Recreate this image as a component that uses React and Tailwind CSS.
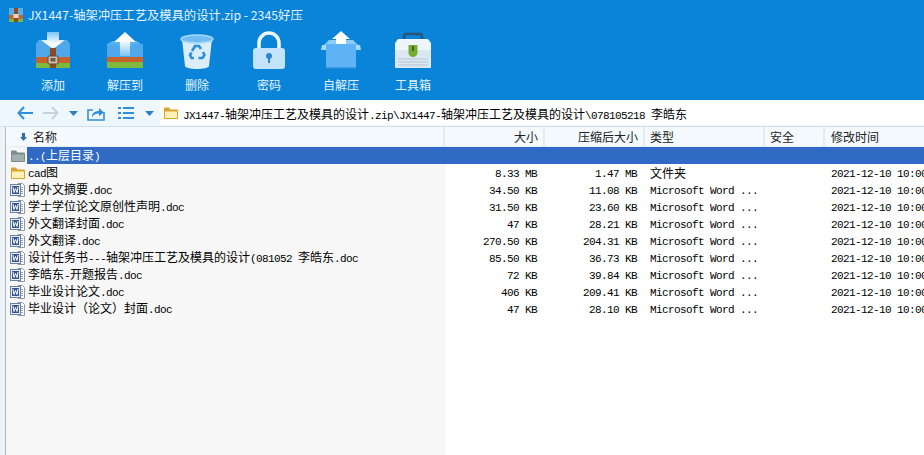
import { Fragment } from 'react';

const CJK_FONT = "[font-family:'Noto_Sans_CJK_SC','Noto_Sans',sans-serif]";

// latin runs are 6px wide per char like the bitmap font in the reference, cjk runs 12px
function Mixed({ text }) {
  const parts = text.match(/[\x20-\x7e]+|[^\x20-\x7e]+/g) || [];
  return (
    <>
      {parts.map((p, i) =>
        /^[\x20-\x7e]/.test(p) ? (
          <span key={i} className="whitespace-pre text-[11px] tracking-[-0.6px] [font-family:'Liberation_Mono',monospace]">{p}</span>
        ) : (
          <span key={i} className="whitespace-pre text-[12px] [font-family:'Noto_Sans_CJK_SC',sans-serif]">{p}</span>
        )
      )}
    </>
  );
}

function AddIcon() {
  return (
    <svg width="40" height="40" viewBox="0 0 40 40">
      <defs>
        <linearGradient id="addArrow" x1="0" y1="0" x2="0" y2="1">
          <stop offset="0" stopColor="#7cc4f6" />
          <stop offset="0.7" stopColor="#ffffff" />
        </linearGradient>
      </defs>
      <path d="M6 10h28l3 4v13H3V14z" fill="#5cb3f3" />
      <path d="M3 14 L6 10 H14 L20 20 L26 10 H34 L37 14 V27 H3z" fill="#4fa8ec" />
      <path d="M14 2h12v8h6L20 19 8 10h6z" fill="url(#addArrow)" />
      <rect x="17" y="18" width="6" height="20" fill="#8a4a24" />
      <rect x="3" y="27" width="34" height="6" fill="#c8622c" />
      <rect x="3" y="33" width="34" height="5" fill="#7db93d" />
      <rect x="17" y="33" width="6" height="5" fill="#8a4a24" />
      <rect x="15" y="26" width="10" height="8" rx="1" fill="#cdbfa9" stroke="#5d4a36" strokeWidth="1" />
      <rect x="17.500" y="28" width="5" height="3.500" fill="#6d5a46" />
    </svg>
  );
}

function ExtractIcon() {
  return (
    <svg width="40" height="40" viewBox="0 0 40 40">
      <defs>
        <linearGradient id="extractArrow" x1="0" y1="0" x2="0" y2="1">
          <stop offset="0.35" stopColor="#ffffff" />
          <stop offset="1" stopColor="#7cc4f6" />
        </linearGradient>
      </defs>
      <path d="M8 11h24l4 3v13H2V14z" fill="#5cb3f3" />
      <path d="M2 14 H12 L20 24 L28 14 H38 V27 H2z" fill="#4fa8ec" />
      <path d="M20 2 31 12h-6v14H15V12H9z" fill="url(#extractArrow)" />
      <rect x="2" y="27" width="36" height="5" fill="#c8622c" />
      <rect x="2" y="32" width="36" height="6" fill="#7db93d" />
    </svg>
  );
}

function TrashIcon() {
  return (
    <svg width="40" height="40" viewBox="0 0 40 40">
      <path d="M5 9l3 27c.3 2 6 3 12 3s11.700-1 12-3l3-27z" fill="#d9edfb" />
      <ellipse cx="20" cy="9" rx="16" ry="4" fill="#6fbdf2" />
      <ellipse cx="20" cy="9" rx="16" ry="4" fill="none" stroke="#a8d8f8" strokeWidth="1.500" />
      <g fill="none" stroke="#2d8fdc" strokeWidth="2.600">
        <path d="M15 21l3-5h4l2 3" />
        <path d="M26 22l1.500 3-2 3h-4" />
        <path d="M17 28h-2.500l-1.500-3 1.500-2.500" />
      </g>
    </svg>
  );
}

function LockIcon() {
  return (
    <svg width="40" height="40" viewBox="0 0 40 40">
      <path d="M10 20v-7a10 10 0 0 1 20 0v7" fill="none" stroke="#eef7fe" strokeWidth="3.500" />
      <rect x="4" y="18" width="32" height="21" rx="3" fill="#c2e3fb" />
      <circle cx="20" cy="26" r="3" fill="#2d86cf" />
      <rect x="19" y="27" width="2" height="6" fill="#2d86cf" />
    </svg>
  );
}

function SelfExtractIcon() {
  return (
    <svg width="40" height="40" viewBox="0 0 40 40">
      <path d="M20 1 29 9h-4v9H15V9h-4z" fill="#fff" />
      <path d="M8 10h7v5H3z M25 10h7l5 5H25z" fill="#8fcbf8" />
      <path d="M1 15h10l-2 5H0z M29 15h10l1 5H31z" fill="#a8d8fb" />
      <rect x="5" y="14" width="30" height="24" fill="#5eb3f6" />
      <path d="M5 37h30v1.500H5z" fill="#3f97dc" />
    </svg>
  );
}

function ToolboxIcon() {
  return (
    <svg width="40" height="40" viewBox="0 0 40 40">
      <path d="M11 10V6.500C11 5 12 4 13.500 4h13C28 4 29 5 29 6.500V10" fill="none" stroke="#2c5474" strokeWidth="2.500" />
      <path d="M5 9h30l3 4v8H2v-8z" fill="#eef6fc" />
      <rect x="2" y="20" width="36" height="18" rx="1" fill="#dbe8f3" />
      <path d="M5 29h30M5 32h30M5 35h30" stroke="#b4c4d2" strokeWidth="1" />
      <path d="M15.500 15h9v8c0 2-2 4-4.500 4s-4.500-2-4.500-4z" fill="#77ad2e" />
      <rect x="19" y="16" width="2" height="5" fill="#3f6a12" />
    </svg>
  );
}

function FolderIcon({ grey, className = '' }) {
  return (
    <svg width="16" height="16" viewBox="0 0 16 16" className={className}>
      <path d="M1 13V3.500C1 3 1.500 2.500 2 2.500h4l1.500 2H14c.6 0 1 .4 1 1V13c0 .6-.4 1-1 1H2c-.6 0-1-.4-1-1z" fill={grey ? '#7e8b8c' : '#d9a52e'} />
      <path d="M2 6.500h12V13H2z" fill={grey ? '#a3afaf' : '#fdf1b8'} />
    </svg>
  );
}

function DocIcon() {
  return (
    <svg width="16" height="16" viewBox="0 0 16 16" className="shrink-0">
      <path d="M8 1.500h4.500l2 2v11H8z" fill="#fff" stroke="#8c98a6" />
      <path d="M10 5.500h3M10 7.500h3M10 9.500h3M10 11.500h3" stroke="#9aa5b3" />
      <rect x="0.500" y="2.500" width="10" height="11" fill="#e9eef8" stroke="#6b7fa8" />
      <rect x="2" y="4" width="7" height="8" fill="#34568f" />
      <path d="M3 5l1 5.500 1.500-4 1.500 4 1-5.500" fill="none" stroke="#fff" strokeWidth="1" />
    </svg>
  );
}

const tools = [
  { label: '添加', Icon: AddIcon },
  { label: '解压到', Icon: ExtractIcon },
  { label: '删除', Icon: TrashIcon },
  { label: '密码', Icon: LockIcon },
  { label: '自解压', Icon: SelfExtractIcon },
  { label: '工具箱', Icon: ToolboxIcon },
];

const files = [
  { name: 'cad图', size: '8.33 MB', packed: '1.47 MB', type: '文件夹', folder: true },
  { name: '中外文摘要.doc', size: '34.50 KB', packed: '11.08 KB' },
  { name: '学士学位论文原创性声明.doc', size: '31.50 KB', packed: '23.60 KB' },
  { name: '外文翻译封面.doc', size: '47 KB', packed: '28.21 KB' },
  { name: '外文翻译.doc', size: '270.50 KB', packed: '204.31 KB' },
  { name: '设计任务书---轴架冲压工艺及模具的设计(081052 李皓东.doc', size: '85.50 KB', packed: '36.73 KB' },
  { name: '李皓东-开题报告.doc', size: '72 KB', packed: '39.84 KB' },
  { name: '毕业设计论文.doc', size: '406 KB', packed: '209.41 KB' },
  { name: '毕业设计（论文）封面.doc', size: '47 KB', packed: '28.10 KB' },
];

function HeaderCell({ width, right, children }) {
  return (
    <div className={`flex h-full shrink-0 items-center border-r-2 border-[#dfebf5] pl-[5px] pr-[5px] ${width} ${right ? 'justify-end' : ''}`}>
      <span className={`text-[12px] text-[#222] ${CJK_FONT}`}>{children}</span>
    </div>
  );
}

export default function App() {
  return (
    <div className="flex h-[455px] w-[924px] flex-col overflow-hidden bg-white text-black">
      {/* title bar + toolbar */}
      <div className="h-[100px] shrink-0 bg-[#0984d8]">
        <div className="flex h-[30px] items-center pl-[8px]">
          <svg width="16" height="16" viewBox="0 0 16 16">
            <rect x="1" y="1" width="14" height="8" fill="#5aaee8" />
            <rect x="1" y="8" width="14" height="4" fill="#c8622c" />
            <rect x="1" y="12" width="14" height="3" fill="#7db93d" />
            <rect x="6" y="1" width="4" height="14" fill="#8a4a24" />
            <rect x="5.500" y="7" width="5" height="4" fill="#e8dcc4" />
          </svg>
          <span className={`ml-[4px] text-[12.3px] text-[#e4f3ff] ${CJK_FONT}`}>JX1447-轴架冲压工艺及模具的设计.zip - 2345好压</span>
        </div>
        <div className="flex pl-[17px]">
          {tools.map(({ label, Icon }) => (
            <div key={label} className="flex w-[72px] flex-col items-center">
              <Icon />
              <span className={`mt-[6px] text-[12px] leading-[18px] text-[#e6f4ff] ${CJK_FONT}`}>{label}</span>
            </div>
          ))}
        </div>
      </div>

      {/* nav + address */}
      <div className="flex h-[27px] shrink-0 items-center border-b border-[#cfe0ee] bg-[#eef7fd] pl-[17px]">
        <svg width="16" height="14" viewBox="0 0 16 14" className="mr-[10px]">
          <path d="M7 1 1.500 7 7 13M2 7h14" fill="none" stroke="#2f8fdc" strokeWidth="2" />
        </svg>
        <svg width="16" height="14" viewBox="0 0 16 14" className="mr-[10px]">
          <path d="M9 1l5.500 6L9 13M14 7H0" fill="none" stroke="#c6d2dc" strokeWidth="2" />
        </svg>
        <svg width="9" height="5" viewBox="0 0 9 5" className="mr-[9px]"><path d="M0 0h9L4.500 5z" fill="#2b7fc4" /></svg>
        <svg width="18" height="15" viewBox="0 0 18 15" className="mr-[13px]">
          <path d="M6 4H1v10h16V6" fill="none" stroke="#2f8fdc" strokeWidth="1.600" />
          <path d="M5 11c0-4 3-6 7-6V2l5 4.500L12 10V7.500c-3 0-5 1-7 3.500z" fill="#2f8fdc" />
        </svg>
        <svg width="16" height="12" viewBox="0 0 16 12" className="mr-[11px]">
          <path d="M0 1h3M0 6h3M0 11h3M5 1h11M5 6h11M5 11h11" stroke="#2f8fdc" strokeWidth="2" />
        </svg>
        <svg width="9" height="5" viewBox="0 0 9 5" className="mr-[6px]"><path d="M0 0h9L4.500 5z" fill="#2b7fc4" /></svg>
        <div className="flex h-[24px] flex-1 items-center bg-white pl-[3px]">
          <FolderIcon className="mr-[4px]" />
          <span className="whitespace-nowrap">
            <Mixed text="JX1447-轴架冲压工艺及模具的设计.zip\JX1447-轴架冲压工艺及模具的设计\078105218 李皓东" />
          </span>
        </div>
      </div>

      {/* file list */}
      <div className="flex min-h-0 flex-1 bg-[#eef3f8] pl-[5px]">
        <div className="flex min-w-0 flex-1 flex-col border-l border-[#a9b8c8] bg-white">
          <div className="flex h-[20px] shrink-0 items-center border-b border-[#e3edf6] bg-[#f5fafe]">
            <div className="flex h-full w-[439px] shrink-0 items-center border-r-2 border-[#dfebf5] pl-[14px]">
              <svg width="7" height="8" viewBox="0 0 7 8" className="mr-[6px]"><path d="M2 0h3v4h2L3.500 8 0 4h2z" fill="#2f6ea8" /></svg>
              <span className={`text-[12px] text-[#222] ${CJK_FONT}`}>名称</span>
            </div>
            <HeaderCell width="w-[100px]" right>大小</HeaderCell>
            <HeaderCell width="w-[100px]" right>压缩后大小</HeaderCell>
            <HeaderCell width="w-[120px]">类型</HeaderCell>
            <HeaderCell width="w-[60px]">安全</HeaderCell>
            <div className="flex h-full items-center pl-[6px]">
              <span className={`text-[12px] text-[#222] ${CJK_FONT}`}>修改时间</span>
            </div>
          </div>
          <div className="min-h-0 flex-1 bg-[linear-gradient(90deg,#f7f7f7_439px,#ffffff_439px)]">
            <div className="flex h-[17px] items-center pl-[4px] leading-[17px]">
              <FolderIcon grey className="shrink-0" />
              <div className="ml-[1px] flex h-full flex-1 items-center bg-[#316ac5] pl-[1px] text-white">
                <span className="whitespace-nowrap"><Mixed text="..(上层目录)" /></span>
              </div>
            </div>
            {files.map((f) => (
              <Fragment key={f.name}>
                <div className="flex h-[17px] items-center leading-[17px]">
                  <div className="flex w-[439px] shrink-0 items-center pl-[4px]">
                    {f.folder ? <FolderIcon className="shrink-0" /> : <DocIcon />}
                    <span className="ml-[2px] whitespace-nowrap"><Mixed text={f.name} /></span>
                  </div>
                  <div className="w-[100px] shrink-0 pr-[8px] text-right"><Mixed text={f.size} /></div>
                  <div className="w-[100px] shrink-0 pr-[8px] text-right"><Mixed text={f.packed} /></div>
                  <div className="w-[180px] shrink-0 pl-[5px]"><Mixed text={f.type || 'Microsoft Word ...'} /></div>
                  <div className="whitespace-nowrap pl-[6px]"><Mixed text="2021-12-10 10:00" /></div>
                </div>
              </Fragment>
            ))}
          </div>
        </div>
      </div>
    </div>
  );
}
